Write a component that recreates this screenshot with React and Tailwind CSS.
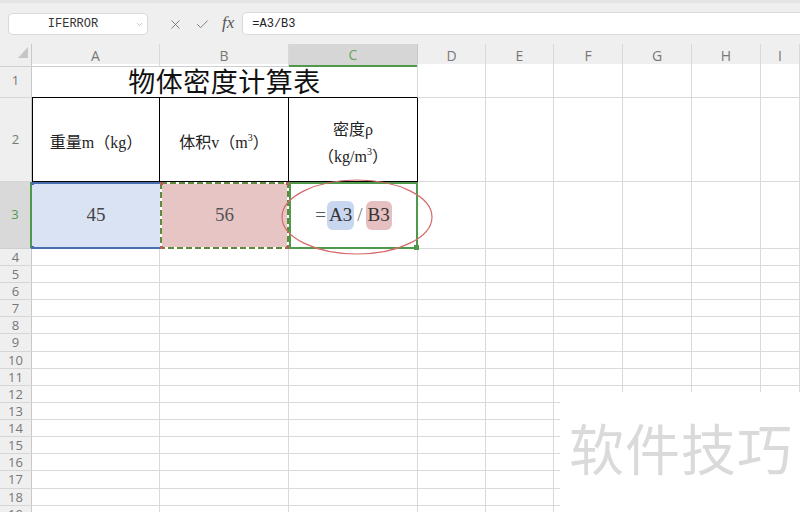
import React from 'react';
import { X, Check, ChevronDown } from 'lucide-react';

const gridCols = 'grid grid-cols-[32px_128px_129px_129px_68px_68px_69px_69px_69px_39px]';
const serif = { fontFamily: '"Liberation Serif", "Noto Sans CJK SC", serif' };
const mono = { fontFamily: '"Liberation Mono", "Noto Sans CJK SC", monospace' };
const ui = { fontFamily: '"Open Sans", "Noto Sans CJK SC", sans-serif' };

function RowHead({ n, active }) {
  return active ? (
    <div className="flex items-center justify-center bg-[#d9d9d9] border-r-2 border-r-[#4f9a4a] border-b border-b-[#cfcfcf] text-[13px] text-[#4f9a4a]" style={ui}>
      {n}
    </div>
  ) : (
    <div className="flex items-center justify-center bg-[#efefef] border-r border-r-[#c9c9c9] border-b border-b-[#d6d6d6] text-[13px] leading-none text-[#777]" style={ui}>
      {n}
    </div>
  );
}

function Blank() {
  return <div className="border-r border-b border-[#dadada] bg-white" />;
}

function Blanks({ count }) {
  return Array.from({ length: count }).map((_, i) => <Blank key={i} />);
}

function EmptyRow({ n, tall }) {
  return (
    <div className={`${gridCols} ${tall ? 'h-[18px]' : 'h-[17px]'}`}>
      <RowHead n={n} />
      <Blanks count={9} />
    </div>
  );
}

export default function App() {
  const rows = [];
  for (let i = 4; i <= 20; i++) rows.push(<EmptyRow key={i} n={i} tall={i === 9 || i === 17} />);

  return (
    <div className="relative w-[800px] h-[512px] overflow-hidden bg-white">
      {/* formula bar */}
      <div className="h-[44px] bg-[#efefef] border-t-[3px] border-t-[#e4e4e4] flex items-start pt-[10px]">
        <div className="ml-[8px] w-[140px] h-[22px] rounded-[5px] border border-[#d9d9d9] bg-white flex items-center relative">
          <span className="w-full text-center text-[12px] text-[#333] pr-[10px]" style={mono}>IFERROR</span>
          <ChevronDown className="absolute right-[3px] top-[6px] text-[#999]" size={9} strokeWidth={1.5} />
        </div>
        <div className="flex items-center h-[22px] ml-[20px] gap-[12px] text-[#666]">
          <X size={15} strokeWidth={1.3} />
          <Check size={15} strokeWidth={1.3} />
          <span className="italic text-[17px] text-[#555] -mt-[2px]" style={{ fontFamily: '"Liberation Serif", serif' }}>fx</span>
        </div>
        <div className="ml-[8px] flex-1 h-[23px] -mt-[1px] rounded-l-[5px] border border-r-0 border-[#d9d9d9] bg-white flex items-center pl-[9px]">
          <span className="text-[12px] text-[#222]" style={mono}>=A3/B3</span>
        </div>
      </div>

      {/* column headers */}
      <div className={`${gridCols} h-[20px] bg-[#efefef]`}>
        <div className="relative border-r border-r-[#c9c9c9] border-b border-b-[#cfcfcf]">
          <div className="absolute left-[18px] top-[3px] w-0 h-0 border-l-[10px] border-l-transparent border-b-[11px] border-b-[#c6c6c6]" />
        </div>
        {['A', 'B', 'C', 'D', 'E', 'F', 'G', 'H', 'I'].map((c) =>
          c === 'C' ? (
            <div key={c} className="flex items-center justify-center bg-[#d6d6d6] border-r border-r-[#c9c9c9] border-b-2 border-b-[#4f9a4a] text-[14px] text-[#6aa560]" style={ui}>
              {c}
            </div>
          ) : (
            <div key={c} className="flex items-center justify-center border-r border-r-[#d9d9d9] border-b border-b-[#cfcfcf] text-[14px] text-[#777]" style={ui}>
              {c}
            </div>
          )
        )}
      </div>

      {/* row 1 */}
      <div className={`${gridCols} h-[34px]`}>
        <RowHead n={1} />
        <div className="col-span-3 flex items-center justify-center pt-[5px] border-r border-r-[#dadada] border-b border-b-black text-[27px] leading-none text-[#111] tracking-[0.5px]" style={serif}>
          物体密度计算表
        </div>
        <Blanks count={6} />
      </div>

      {/* row 2 */}
      <div className={`${gridCols} h-[84px]`}>
        <RowHead n={2} />
        <div className="flex items-center justify-center pt-[6px] border-l border-r border-b border-black text-[16px] text-[#222]" style={serif}>
          重量m（kg）
        </div>
        <div className="flex items-center justify-center pt-[6px] border-r border-b border-black text-[16px] text-[#222]" style={serif}>
          <span>体积v（m<sup className="text-[10px] -top-[7px]">3</sup>）</span>
        </div>
        <div className="flex flex-col items-center justify-center pt-[7px] gap-[5px] border-r border-b border-black text-[16px] text-[#222] leading-[22px]" style={serif}>
          <span>密度ρ</span>
          <span>（kg/m<sup className="text-[10px] -top-[7px]">3</sup>）</span>
        </div>
        <Blanks count={6} />
      </div>

      {/* row 3 */}
      <div className={`${gridCols} h-[67px]`}>
        <RowHead n={3} active />
        <div className="relative flex items-center justify-center bg-[#dae3f3] border-t-2 border-b-2 border-[#4a6db0] text-[19px] text-[#444]" style={serif}>
          45
          <span className="absolute -left-[1px] -top-[2px] w-[3px] h-[3px] bg-[#4a6db0]" />
          <span className="absolute -left-[1px] -bottom-[2px] w-[3px] h-[3px] bg-[#4a6db0]" />
        </div>
        <div className="relative flex items-center justify-center bg-[#e8c5c5] text-[19px] text-[#555]" style={serif}>
          56
          <svg className="absolute inset-0" width="129" height="67">
            <rect x="1" y="1" width="127" height="65" fill="none" stroke="#ffffff" strokeWidth="2" />
            <rect x="1" y="1" width="127" height="65" fill="none" stroke="#5e8a3c" strokeWidth="2" strokeDasharray="6 3" />
            <rect x="0" y="0" width="3" height="3" fill="#c05a5a" />
            <rect x="0" y="64" width="3" height="3" fill="#c05a5a" />
            <rect x="126" y="0" width="3" height="3" fill="#c05a5a" />
            <rect x="126" y="64" width="3" height="3" fill="#c05a5a" />
          </svg>
        </div>
        <div className="relative flex items-center justify-center border-2 border-[#4f9a4a] bg-white text-[19px] text-[#333]" style={serif}>
          <span className="text-[#555] pr-[1px]">=</span>
          <span className="bg-[#c8d6f0] rounded-[6px] px-[2px]">A3</span>
          <span className="text-[#777] px-[3px]">/</span>
          <span className="bg-[#e6c0c0] rounded-[6px] px-[2px]">B3</span>
          <span className="absolute -right-[3px] -bottom-[3px] w-[5px] h-[5px] bg-[#4f9a4a]" />
        </div>
        <Blanks count={6} />
      </div>

      {rows}

      {/* annotation ellipse */}
      <svg className="absolute left-[280px] top-[178px]" width="156" height="79">
        <ellipse cx="77" cy="39" rx="75" ry="37" fill="none" stroke="#d46a6a" strokeWidth="1.2" />
      </svg>

      {/* watermark */}
      <div className="absolute left-[560px] top-[392px] right-0 bottom-0 bg-white">
        <div className="mt-[27px] ml-[9px] text-[55px] leading-none text-[#dadada] tracking-[1px]" style={{ fontFamily: '"Noto Sans CJK SC", sans-serif' }}>
          软件技巧
        </div>
      </div>
    </div>
  );
}
